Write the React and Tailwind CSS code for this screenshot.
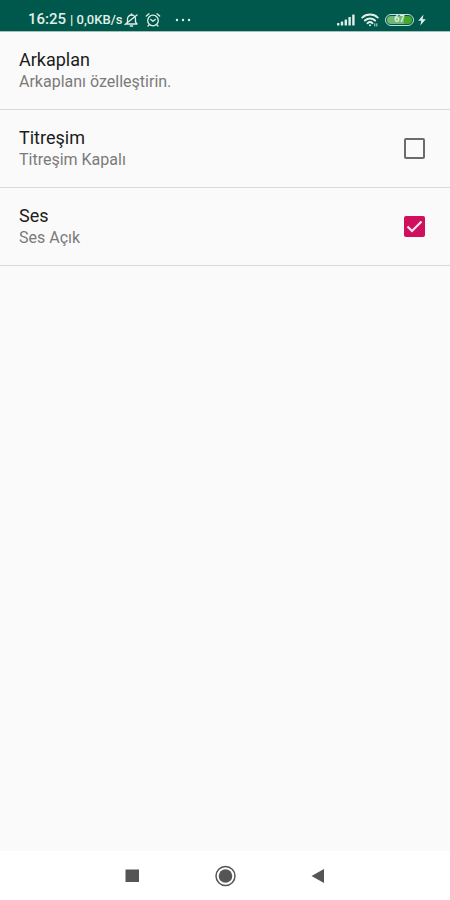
import { useState } from 'react'

function BellOffIcon() {
  return (
    <svg width="15" height="16" viewBox="0 0 15 16" fill="none" stroke="currentColor" strokeWidth="1.3" strokeLinecap="round" strokeLinejoin="round" aria-hidden="true">
      <path d="M2.500 12h10.500l-1.500-2V7A4 4 0 0 0 7.500 3a4 4 0 0 0-4 4v3z" />
      <path d="M6.300 14h2.400M7.500 1.800v1M1 12.500 13 3" />
    </svg>
  )
}

function AlarmIcon() {
  return (
    <svg width="16" height="16" viewBox="0 0 16 16" fill="none" stroke="currentColor" strokeWidth="1.3" strokeLinecap="round" strokeLinejoin="round" aria-hidden="true">
      <circle cx="8" cy="8.500" r="5.300" />
      <path d="M1.300 4 4 1.800M14.700 4 12 1.800M5.700 7.500 8 9.300l2.300-1.800M4 13l-1 1M12 13l1 1" />
    </svg>
  )
}

function SignalIcon() {
  return (
    <svg width="18" height="12" viewBox="0 0 18 12" fill="currentColor" aria-hidden="true">
      <rect x="0" y="9" width="2.400" height="2.500" rx="0.500" />
      <rect x="3.800" y="7.500" width="2.400" height="4" rx="0.500" />
      <rect x="7.600" y="5.500" width="2.400" height="6" rx="0.500" />
      <rect x="11.400" y="3" width="2.400" height="8.500" rx="0.500" />
      <rect x="15.200" y="0.500" width="2.400" height="11" rx="0.500" />
    </svg>
  )
}

function WifiIcon() {
  return (
    <svg width="18" height="14" viewBox="0 0 18 14" fill="none" stroke="currentColor" strokeWidth="1.900" strokeLinecap="round" aria-hidden="true">
      <path d="M1.200 4.600a11.500 11.500 0 0 1 15.600 0M3.900 7.500a7.600 7.600 0 0 1 10.200 0M6.500 10.200a3.800 3.800 0 0 1 5 0" />
      <circle cx="9" cy="12.300" r="1" fill="currentColor" stroke="none" />
      <path d="M13.800 10.800v2.200M15.800 10.800v2.200" strokeWidth="0.900" />
    </svg>
  )
}

function Battery({ level }) {
  return (
    <span className="flex h-3 w-[29px] rounded-full border border-[#c5e3d6] p-px">
      <span
        className="flex flex-1 items-center justify-center rounded-full text-[9px] leading-[9px] font-bold"
        style={{ background: `linear-gradient(to right, #6fb873 ${level}%, #43a92f ${level}%)` }}
      >
        {level}
      </span>
    </span>
  )
}

function BoltIcon() {
  return (
    <svg width="8" height="12" viewBox="0 0 8 12" fill="currentColor" aria-hidden="true">
      <path d="M5.500 0.500 0.300 6.800h3L2.300 11.500 7.800 5.200H4.600z" />
    </svg>
  )
}

function StatusBar() {
  return (
    <header className="flex h-8 items-center border-b border-[#a3bfb8] bg-[#00574b] pt-2 pr-6 pl-7 font-medium text-[#e0efe9]">
      <span className="text-[15px]">16:25</span>
      <span className="ml-1 text-[13px] whitespace-pre">| 0,0KB/s</span>
      <span className="ml-0.5 flex items-center gap-1.5">
        <BellOffIcon />
        <AlarmIcon />
      </span>
      <svg className="ml-3.5" width="16" height="4" viewBox="0 0 16 4" fill="currentColor" aria-hidden="true">
        <circle cx="2" cy="2" r="1.200" />
        <circle cx="8" cy="2" r="1.200" />
        <circle cx="14" cy="2" r="1.200" />
      </svg>
      <span className="ml-auto flex items-center gap-1.5">
        <SignalIcon />
        <WifiIcon />
        <span className="flex items-center gap-1">
          <Battery level={67} />
          <BoltIcon />
        </span>
      </span>
    </header>
  )
}

function PreferenceText({ title, summary }) {
  return (
    <span className="flex min-w-0 flex-1 flex-col text-left">
      <span className="text-lg leading-[22px] text-[#1c1c1c]">{title}</span>
      <span className="text-base leading-[22px] text-[#7a7a7a]">{summary}</span>
    </span>
  )
}

function CheckPreference({ title, summary, checked, onChange }) {
  return (
    <label className="flex h-[78px] items-center border-b border-[#d9d9d9] pr-[25px] pl-[19px]">
      <PreferenceText title={title} summary={summary} />
      <span className="relative flex">
        <input
          type="checkbox"
          checked={checked}
          onChange={(e) => onChange(e.target.checked)}
          className="size-[21px] appearance-none rounded-xs border-2 border-[#6b6b6b] checked:border-[#d0105c] checked:bg-[#d0105c]"
        />
        {checked && (
          <svg className="pointer-events-none absolute inset-0" width="21" height="21" viewBox="0 0 21 21" fill="none" stroke="#fbe6ef" strokeWidth="2.200" aria-hidden="true">
            <path d="M3.500 10.500 8 15 17.500 5.500" />
          </svg>
        )}
      </span>
    </label>
  )
}

function NavBar() {
  return (
    <nav className="flex h-[49px] items-center justify-center gap-[75px] bg-white text-[#555555]">
      <button aria-label="Son uygulamalar">
        <svg width="14" height="14" viewBox="0 0 14 14" fill="currentColor" aria-hidden="true">
          <rect x="0.500" y="0.500" width="13.500" height="12.500" />
        </svg>
      </button>
      <button aria-label="Ana ekran">
        <svg width="22" height="22" viewBox="0 0 22 22" aria-hidden="true">
          <circle cx="11.500" cy="11" r="9.500" fill="none" stroke="currentColor" strokeWidth="1.500" />
          <circle cx="11.500" cy="11" r="6.800" fill="currentColor" />
        </svg>
      </button>
      <button aria-label="Geri">
        <svg width="14" height="16" viewBox="0 0 14 16" fill="currentColor" aria-hidden="true">
          <path d="M0.500 8 13 1v14z" />
        </svg>
      </button>
    </nav>
  )
}

export default function App() {
  const [vibration, setVibration] = useState(false)
  const [sound, setSound] = useState(true)

  return (
    <div className="flex min-h-screen flex-col bg-[#fafafa] font-[Roboto,sans-serif]">
      <StatusBar />
      <main className="flex-1">
        <button className="flex h-[78px] w-full items-center border-b border-[#d9d9d9] px-[19px]">
          <PreferenceText title="Arkaplan" summary="Arkaplanı özelleştirin." />
        </button>
        <CheckPreference
          title="Titreşim"
          summary={vibration ? 'Titreşim Açık' : 'Titreşim Kapalı'}
          checked={vibration}
          onChange={setVibration}
        />
        <CheckPreference
          title="Ses"
          summary={sound ? 'Ses Açık' : 'Ses Kapalı'}
          checked={sound}
          onChange={setSound}
        />
      </main>
      <NavBar />
    </div>
  )
}
